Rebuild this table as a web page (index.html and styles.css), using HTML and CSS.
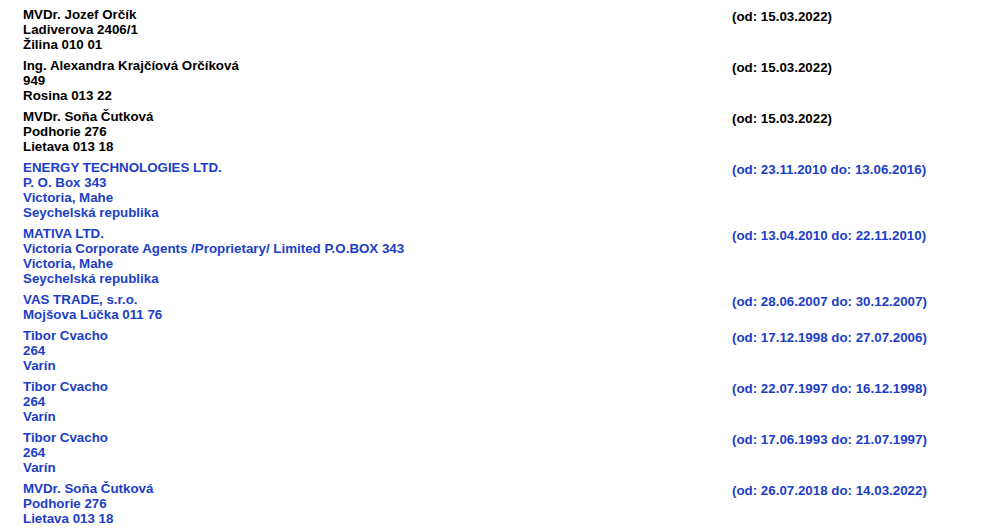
FILE: index.html
```html
<!DOCTYPE html>
<html lang="sk">
<head>
<meta charset="utf-8">
<title>Spoločníci</title>
<link rel="stylesheet" href="styles.css">
</head>
<body>
<div class="list">
  <div class="entry">
    <div class="addr">MVDr. Jozef Orčík<br>Ladiverova 2406/1<br>Žilina 010 01</div>
    <div class="date">(od: 15.03.2022)</div>
  </div>
  <div class="entry">
    <div class="addr">Ing. Alexandra Krajčíová Orčíková<br>949<br>Rosina 013 22</div>
    <div class="date">(od: 15.03.2022)</div>
  </div>
  <div class="entry">
    <div class="addr">MVDr. Soňa Čutková<br>Podhorie 276<br>Lietava 013 18</div>
    <div class="date">(od: 15.03.2022)</div>
  </div>
  <div class="entry old">
    <div class="addr">ENERGY TECHNOLOGIES LTD.<br>P. O. Box 343<br>Victoria, Mahe<br>Seychelská republika</div>
    <div class="date">(od: 23.11.2010 do: 13.06.2016)</div>
  </div>
  <div class="entry old">
    <div class="addr">MATIVA LTD.<br>Victoria Corporate Agents /Proprietary/ Limited P.O.BOX 343<br>Victoria, Mahe<br>Seychelská republika</div>
    <div class="date">(od: 13.04.2010 do: 22.11.2010)</div>
  </div>
  <div class="entry old">
    <div class="addr">VAS TRADE, s.r.o.<br>Mojšova Lúčka 011 76</div>
    <div class="date">(od: 28.06.2007 do: 30.12.2007)</div>
  </div>
  <div class="entry old">
    <div class="addr">Tibor Cvacho<br>264<br>Varín</div>
    <div class="date">(od: 17.12.1998 do: 27.07.2006)</div>
  </div>
  <div class="entry old">
    <div class="addr">Tibor Cvacho<br>264<br>Varín</div>
    <div class="date">(od: 22.07.1997 do: 16.12.1998)</div>
  </div>
  <div class="entry old">
    <div class="addr">Tibor Cvacho<br>264<br>Varín</div>
    <div class="date">(od: 17.06.1993 do: 21.07.1997)</div>
  </div>
  <div class="entry old">
    <div class="addr">MVDr. Soňa Čutková<br>Podhorie 276<br>Lietava 013 18</div>
    <div class="date">(od: 26.07.2018 do: 14.03.2022)</div>
  </div>
</div>
</body>
</html>
```

FILE: styles.css
```css
html, body {
  margin: 0;
  padding: 0;
  background: #ffffff;
}

body {
  font-family: "Liberation Sans", Arial, sans-serif;
  font-size: 13.333px;
  font-weight: bold;
  line-height: 15px;
  color: #000000;
}

.list {
  padding: 4px 0 0 23px;
}

.entry {
  display: grid;
  grid-template-columns: 709px 1fr;
  padding: 3px 0;
}

.entry.old {
  color: #1c3ec6;
}

.date {
  padding-top: 2px;
}
```
